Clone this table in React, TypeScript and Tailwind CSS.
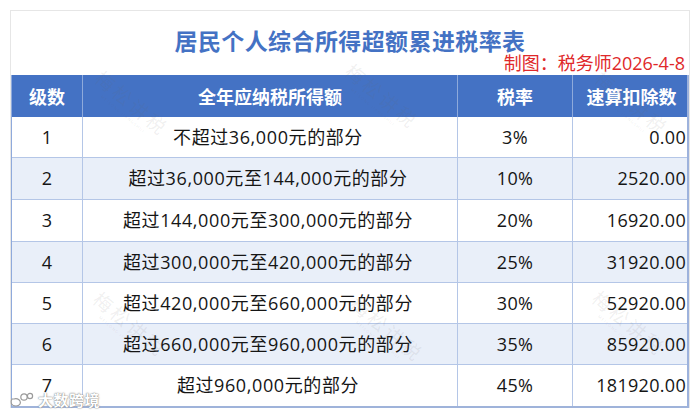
import React from "react";

const rows = [
  { lv: "1", range: "不超过36,000元的部分", rate: "3%", ded: "0.00", h: "h-[40px]" },
  { lv: "2", range: "超过36,000元至144,000元的部分", rate: "10%", ded: "2520.00", h: "h-[42px]" },
  { lv: "3", range: "超过144,000元至300,000元的部分", rate: "20%", ded: "16920.00", h: "h-[42px]" },
  { lv: "4", range: "超过300,000元至420,000元的部分", rate: "25%", ded: "31920.00", h: "h-[41px]" },
  { lv: "5", range: "超过420,000元至660,000元的部分", rate: "30%", ded: "52920.00", h: "h-[41px]" },
  { lv: "6", range: "超过660,000元至960,000元的部分", rate: "35%", ded: "85920.00", h: "h-[41px]" },
  { lv: "7", range: "超过960,000元的部分", rate: "45%", ded: "181920.00", h: "h-[42px]" },
];

const marks = [
  { x: 130, y: 112 },
  { x: 380, y: 105 },
  { x: 630, y: 112 },
  { x: 128, y: 333 },
  { x: 385, y: 338 },
  { x: 627, y: 332 },
];

function Watermark({ x, y }: { x: number; y: number }) {
  return (
    <div
      className="absolute pointer-events-none flex flex-col items-center rotate-[40deg]"
      style={{ left: x - 50, top: y - 20 }}
    >
      <div className="w-[100px] text-center text-[19px] font-normal leading-[22px] tracking-[3px] text-[rgba(110,110,110,0.10)]">
        梅松讲税
      </div>
      <div className="w-[100px] text-center text-[4px] leading-[5px] tracking-[1px] text-[rgba(110,110,110,0.14)]">
        MEISONG JIANGSHUI
      </div>
    </div>
  );
}

export default function App() {
  const font = { fontFamily: '"Open Sans", "Noto Sans CJK SC", sans-serif' };
  const cjk = { fontFamily: '"Noto Sans CJK SC", sans-serif' };
  return (
    <div className="relative w-[700px] h-[416px] bg-white overflow-hidden pt-[10px] px-[10px]" style={font}>
      <div className="border-t border-x border-[#e6e6e6] flex flex-col">
        <div className="h-[64px] relative flex flex-col items-center">
          <div className="pt-[16px] text-[23px] leading-[27px] font-bold text-[#4472c4] tracking-[0.4px]" style={cjk}>
            居民个人综合所得超额累进税率表
          </div>
          <div className="absolute right-[4px] top-[41px] text-[18px] leading-[22px] font-normal text-[#e0282a]">
            制图：税务师2026-4-8
          </div>
        </div>
        <div className="border-l border-r-2 border-b-2 border-l-[#8faadc] border-r-[#9db2dc] border-b-[#9fb3da]">
          <div className="grid grid-cols-[71px_375px_115px_117px] h-[42px] bg-[#4472c4] text-white font-bold text-[18px]" style={cjk}>
            <div className="flex items-center justify-center border-r border-[#8eaadb]">级数</div>
            <div className="flex items-center justify-center border-r border-[#8eaadb]">全年应纳税所得额</div>
            <div className="flex items-center justify-center border-r border-[#8eaadb]">税率</div>
            <div className="flex items-center justify-center">速算扣除数</div>
          </div>
          {rows.map((r, i) => (
            <div
              key={r.lv}
              className={`grid grid-cols-[71px_375px_115px_117px] ${r.h} text-[18px] text-[#151515] ${
                i % 2 === 1 ? "bg-[#e9eff9]" : "bg-white"
              } ${i > 0 ? "border-t border-[#b4c6e7]" : ""}`}
            >
              <div className="flex items-center justify-center border-r border-[#b4c6e7]">{r.lv}</div>
              <div className="flex items-center justify-center border-r border-[#b4c6e7] pr-[4px] tracking-[0.6px]">{r.range}</div>
              <div className="flex items-center justify-center border-r border-[#b4c6e7] tracking-[0.3px]">{r.rate}</div>
              <div className="flex items-center justify-end pr-[4px] tracking-[0.3px]">{r.ded}</div>
            </div>
          ))}
        </div>
      </div>

      {marks.map((m, i) => (
        <Watermark key={i} x={m.x} y={m.y} />
      ))}

      <div className="absolute left-[8px] top-[391px] flex items-center gap-[4px]" style={cjk}>
        <svg width="26" height="18" viewBox="0 0 26 18">
          <path
            d="M4 8 C2 11 3 15 8 15 C12 15 13 12 12 10 C11 8 8 7 6 8 Z"
            fill="white"
            stroke="#9a9a9a"
            strokeWidth="1.2"
          />
          <circle cx="16" cy="6" r="3.2" fill="white" stroke="#9a9a9a" strokeWidth="1.2" />
          <circle cx="22" cy="5" r="2.6" fill="white" stroke="#9a9a9a" strokeWidth="1.2" />
        </svg>
        <div className="text-[15px] leading-[18px] font-bold text-white tracking-[0.5px] [text-shadow:0_0_1px_#777,0_0_2px_#999]">
          大数跨境
        </div>
      </div>
    </div>
  );
}
